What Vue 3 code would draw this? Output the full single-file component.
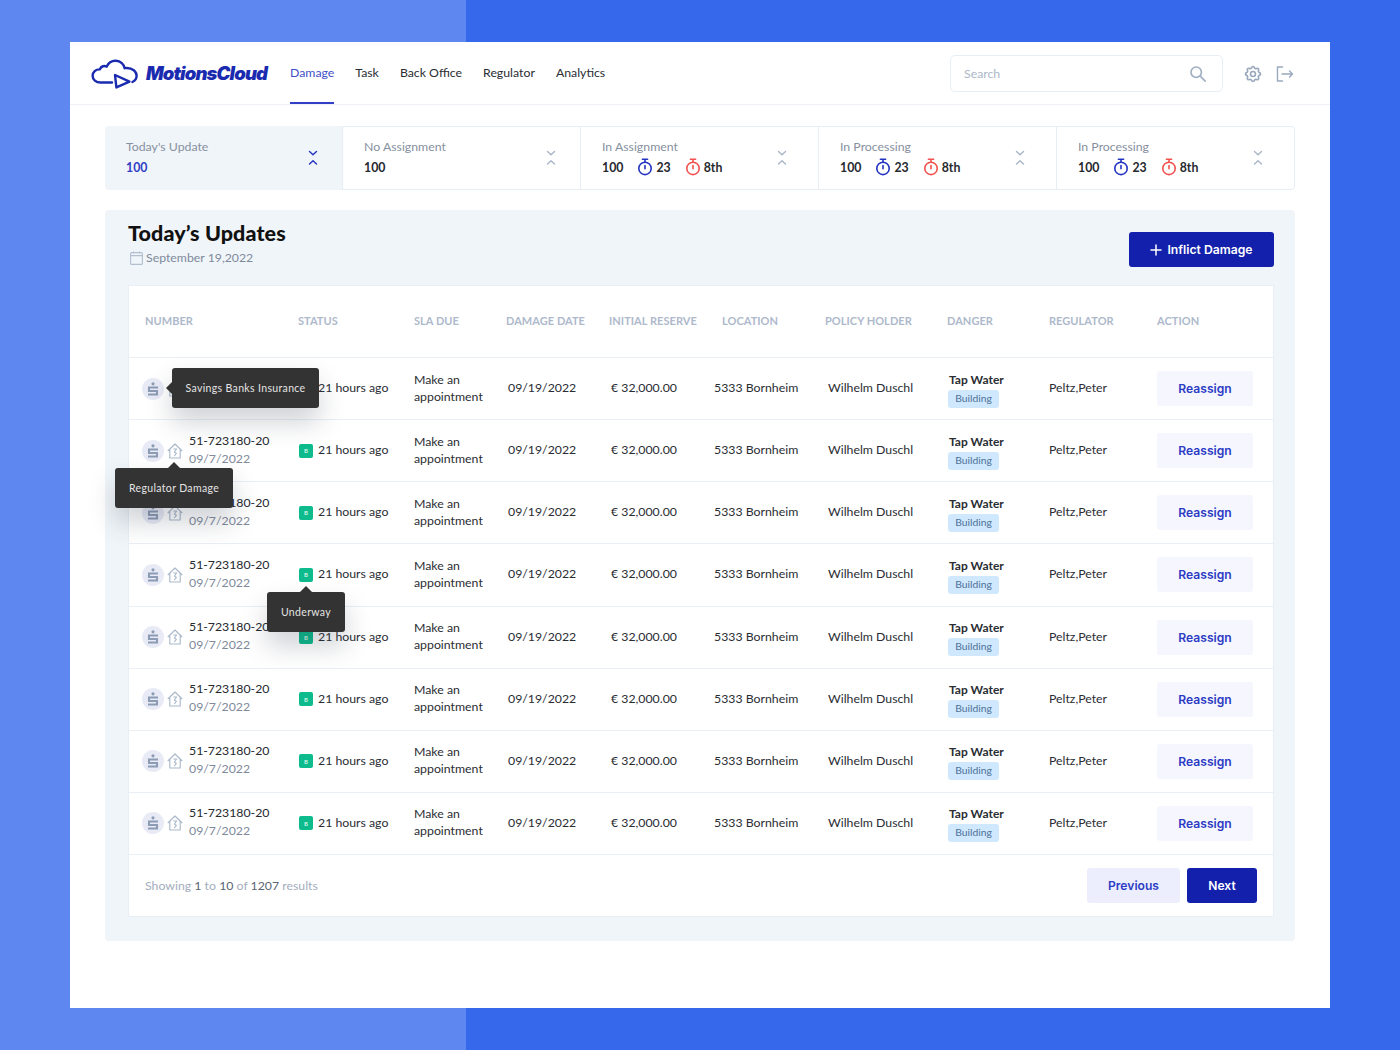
<script setup>
const navItems = ['Damage', 'Task', 'Back Office', 'Regulator', 'Analytics']
const stats = [
  { label: "Today's Update", value: '100', active: true },
  { label: 'No Assignment', value: '100' },
  { label: 'In Assignment', value: '100', timers: true },
  { label: 'In Processing', value: '100', timers: true },
  { label: 'In Processing', value: '100', timers: true }
]
const headers = ['NUMBER', 'STATUS', 'SLA DUE', 'DAMAGE DATE', 'INITIAL RESERVE', 'LOCATION', 'POLICY HOLDER', 'DANGER', 'REGULATOR', 'ACTION']
const rows = [
  { id: 1, tip: 'bank' },
  { id: 2, tip: 'house' },
  { id: 3 },
  { id: 4, tip: 'status' },
  { id: 5 },
  { id: 6 },
  { id: 7 },
  { id: 8 }
]
</script>

<template>
  <div class="page">
    <div class="window">
      <header class="topbar">
        <div class="logo">
          <svg class="logo-mark" width="48" height="30" viewBox="0 0 48 30" fill="none" stroke="#1a2bb0" stroke-width="2.4" stroke-linejoin="round" stroke-linecap="round">
            <path d="M21 23.5H9.5C5 23.5 1.6 20.6 1.6 16.8C1.6 13 4.8 10.3 8.7 10.4C10.3 6.9 13.3 6.4 15.7 7.6C17.6 3.4 21.3 1.6 25 1.8C29.6 2 33 5.3 33.6 9.2C34.3 9 35 9 35.8 9C41.4 9 45.6 12.4 45.6 16.8C45.6 19.4 44.2 21.8 41.4 23" />
            <path d="M24 16L38.5 22.6L25.4 28.4Z" />
          </svg>
          <span class="logo-text">MotionsCloud</span>
        </div>
        <nav class="nav">
          <a v-for="(item, i) in navItems" :key="item" class="nav-item" :class="{ active: i === 0 }">{{ item }}</a>
        </nav>
        <div class="search">
          <span class="search-text">Search</span>
          <svg width="18" height="18" viewBox="0 0 18 18" fill="none" stroke="#a3b0c2" stroke-width="1.7" stroke-linecap="round">
            <circle cx="7.2" cy="7.2" r="5.2" />
            <path d="M11.2 11.2L16.2 16.2" />
          </svg>
        </div>
        <svg class="gear" width="20" height="20" viewBox="0 0 24 24" fill="none" stroke="#9aa9bd" stroke-width="2" stroke-linejoin="round">
          <path d="M10.325 4.317c.426-1.756 2.924-1.756 3.35 0a1.724 1.724 0 002.573 1.066c1.543-.94 3.31.826 2.37 2.37a1.724 1.724 0 001.065 2.572c1.756.426 1.756 2.924 0 3.35a1.724 1.724 0 00-1.066 2.573c.94 1.543-.826 3.31-2.37 2.37a1.724 1.724 0 00-2.572 1.065c-.426 1.756-2.924 1.756-3.35 0a1.724 1.724 0 00-2.573-1.066c-1.543.94-3.31-.826-2.37-2.37a1.724 1.724 0 00-1.065-2.572c-1.756-.426-1.756-2.924 0-3.35a1.724 1.724 0 001.066-2.573c-.94-1.543.826-3.31 2.37-2.37.996.608 2.296.07 2.572-1.065z" />
          <circle cx="12" cy="12" r="3" />
        </svg>
        <svg class="exit" width="18" height="16" viewBox="0 0 18 16" fill="none" stroke="#9aa9bd" stroke-width="1.4" stroke-linecap="round" stroke-linejoin="round">
          <path d="M6.5 1H1.5V15H6.5" />
          <path d="M6 8H16.5M13.5 5L16.5 8L13.5 11" />
        </svg>
      </header>

      <main class="content">
        <section class="stats">
          <div v-for="(s, i) in stats" :key="i" class="stat" :class="{ active: s.active }">
            <div class="stat-body">
              <div class="stat-label">{{ s.label }}</div>
              <div class="stat-values">
                <span class="stat-num">{{ s.value }}</span>
                <template v-if="s.timers">
                  <span class="timer">
                    <svg width="16" height="18" viewBox="0 0 16 18" fill="none" stroke="#2434c2" stroke-width="1.6" stroke-linecap="round">
                      <circle cx="8" cy="10.4" r="6.2" />
                      <path d="M5.4 1.2H10.6M8 1.4V4M8 7.6V10.8" />
                    </svg>
                    23
                  </span>
                  <span class="timer">
                    <svg width="16" height="18" viewBox="0 0 16 18" fill="none" stroke="#f2514f" stroke-width="1.6" stroke-linecap="round">
                      <circle cx="8" cy="10.4" r="6.2" />
                      <path d="M5.4 1.2H10.6M8 1.4V4M8 7.6V10.8" />
                    </svg>
                    8th
                  </span>
                </template>
              </div>
            </div>
            <svg class="chev" width="10" height="16" viewBox="0 0 10 16" fill="none" :stroke="s.active ? '#2434c2' : '#a9b6c8'" stroke-width="1.4" stroke-linecap="round" stroke-linejoin="round">
              <path d="M1.5 1.5L5 4.8L8.5 1.5M1.5 14L5 10.7L8.5 14" />
            </svg>
          </div>
        </section>

        <section class="panel">
          <div class="panel-head">
            <div>
              <h1 class="title">Today’s Updates</h1>
              <div class="date">
                <svg width="13" height="14" viewBox="0 0 13 14" fill="none" stroke="#b3bfd0" stroke-width="1.1">
                  <rect x="0.6" y="1.6" width="11.8" height="11.8" rx="1" />
                  <path d="M0.6 4.6H12.4M3.5 0.4V2.4M9.5 0.4V2.4" />
                </svg>
                September 19,2022
              </div>
            </div>
            <button class="btn-primary">
              <svg width="12" height="12" viewBox="0 0 12 12" stroke="#fff" stroke-width="1.5" stroke-linecap="round"><path d="M6 1V11M1 6H11" /></svg>
              Inflict Damage
            </button>
          </div>

          <div class="card">
            <div class="thead">
              <div v-for="h in headers" :key="h">{{ h }}</div>
            </div>
            <div v-for="r in rows" :key="r.id" class="row">
              <div class="icons">
                <svg class="bank" width="22" height="22" viewBox="0 0 22 22">
                  <circle cx="11" cy="11" r="11" fill="#e8eaf6" />
                  <circle cx="11" cy="5.8" r="1.6" fill="#8c9cb5" />
                  <path d="M16 9.5H7V13H15V16.5H6" fill="none" stroke="#8c9cb5" stroke-width="2.1" />
                </svg>
                <svg class="house" width="16" height="16" viewBox="0 0 16 16" fill="none" stroke="#a8b7ca" stroke-width="1.1" stroke-linejoin="round">
                  <path d="M0.8 8L8 1L15.2 8M2.8 6.2V15H13.2V6.2" />
                  <path d="M6.4 6H9.6L7.4 9L9.4 10.4L7.2 13" />
                </svg>
                <div v-if="r.tip === 'bank'" class="tip tip-bank">Savings Banks Insurance</div>
                <div v-if="r.tip === 'house'" class="tip tip-house">Regulator Damage</div>
              </div>
              <div class="two-line">
                <div class="num">51-723180-20</div>
                <div class="sub">09/7/2022</div>
              </div>
              <div class="status">
                <span class="badge">B</span>
                21 hours ago
                <div v-if="r.tip === 'status'" class="tip tip-status">Underway</div>
              </div>
              <div class="sla">Make an<br />appointment</div>
              <div>09/19/2022</div>
              <div>€ 32,000.00</div>
              <div>5333 Bornheim</div>
              <div>Wilhelm Duschl</div>
              <div class="danger">
                <div class="danger-name">Tap Water</div>
                <span class="tag">Building</span>
              </div>
              <div>Peltz,Peter</div>
              <button class="btn-soft">Reassign</button>
            </div>
            <div class="foot">
              <div class="showing">Showing <b>1</b> to <b>10</b> of <b>1207</b> results</div>
              <div class="pager">
                <button class="btn-prev">Previous</button>
                <button class="btn-next">Next</button>
              </div>
            </div>
          </div>
        </section>
      </main>
    </div>
  </div>
</template>

<style scoped>
* { box-sizing: border-box; }
.page {
  width: 1400px;
  height: 1050px;
  padding: 42px 70px;
  background: linear-gradient(90deg, #5e88f0 466px, #3568ea 466px);
  font-family: Lato, "Liberation Sans", sans-serif;
  font-size: 12.3px;
  color: #26292e;
  overflow: hidden;
}
.window { height: 966px; background: #fff; }
.topbar {
  height: 63px;
  display: flex;
  align-items: center;
  padding: 0 36px 0 21px;
  border-bottom: 1px solid #eef2f7;
}
.logo { display: flex; align-items: center; width: 199px; }
.logo-mark { flex: none; margin-top: 2px; }
.logo-text {
  margin-left: 7px;
  font-family: Inter, sans-serif;
  font-weight: 900;
  font-style: italic;
  font-size: 18.5px;
  letter-spacing: -0.85px;
  color: #1a2bb0;
}
.nav { display: flex; gap: 21px; height: 62px; margin-right: auto; }
.nav-item {
  display: flex;
  align-items: center;
  height: 62px;
  padding-top: 1px;
  font-size: 12.3px;
  color: #2a2d33;
  border-bottom: 2px solid transparent;
}
.nav-item.active { color: #3f4fc8; border-bottom-color: #3040c6; }
.search {
  width: 273px;
  height: 37px;
  margin-top: 1px;
  display: flex;
  align-items: center;
  justify-content: space-between;
  padding: 0 15px 0 13px;
  border: 1px solid #e8eef5;
  border-radius: 5px;
}
.search-text { color: #abb7c8; font-size: 12.3px; }
.gear { margin-left: 20px; margin-top: 1px; }
.exit { margin-left: 13px; margin-top: 1px; }

.content { padding: 21px 35px 0; }
.stats {
  display: grid;
  grid-template-columns: 237px 238px 238px 238px 239px;
  height: 64px;
}
.stat {
  display: flex;
  align-items: center;
  justify-content: space-between;
  padding: 0 31px 0 21px;
  border: 1px solid #e6edf5;
  border-right: 0;
}
.stat:nth-child(-n+2) { padding-right: 24px; }
.stat:last-child { border-right: 1px solid #e6edf5; border-radius: 0 4px 4px 0; }
.stat.active { background: #f0f5f9; border: 0; border-radius: 4px 0 0 4px; }
.stat-label { color: #8790a0; font-size: 12.3px; line-height: 16px; margin-bottom: 3px; }
.stat-values { display: flex; align-items: center; height: 20px; font-weight: 700; font-size: 12.3px; color: #26292e; }
.active .stat-num { color: #3040c6; }
.timer { display: flex; align-items: center; gap: 3px; margin-left: 14px; }
.timer svg { margin-top: -1px; }
.chev { flex: none; }

.panel {
  margin-top: 20px;
  height: 731px;
  padding: 0 21px 0 23px;
  background: #f0f5f9;
  border-radius: 4px;
}
.panel-head {
  height: 75px;
  display: flex;
  justify-content: space-between;
  align-items: flex-start;
  padding-top: 10px;
}
.title {
  margin: 0;
  font-family: Lato, sans-serif;
  font-weight: 900;
  font-size: 21.5px;
  line-height: 26px;
  letter-spacing: 0.1px;
  color: #111;
}
.date { display: flex; align-items: center; gap: 3px; margin: 4px 0 0 2px; color: #7f8a9b; font-size: 12.3px; line-height: 16px; }
.btn-primary {
  margin-top: 12px;
  width: 145px;
  height: 35px;
  display: flex;
  align-items: center;
  justify-content: center;
  gap: 5px;
  padding-top: 1px;
  border: 0;
  border-radius: 3px;
  background: #1220ac;
  color: #fff;
  font-family: Inter, sans-serif;
  font-weight: 600;
  font-size: 12.2px;
}
.card {
  height: 632px;
  background: #fff;
  border: 1px solid #e9eff6;
  position: relative;
}
.thead {
  height: 71px;
  display: grid;
  grid-template-columns: 153px 116px 92px 103px 113px 103px 122px 102px 108px auto;
  align-items: center;
  padding: 0 0 2px 16px;
  font-size: 11px;
  letter-spacing: 0.05px;
  font-weight: 700;
  color: #aeb9cb;
}
.row {
  height: 62.125px;
  display: grid;
  grid-template-columns: 47px 109px 116px 94px 103px 103px 114px 120px 101px 108px 96px;
  align-items: center;
  padding: 0 0 2px 13px;
  border-top: 1px solid #e9eff5;
  font-size: 12.3px;
  color: #2a2d33;
}
.icons { position: relative; display: flex; align-items: center; gap: 3px; margin-top: 2px; }
.bank, .house { flex: none; }
.two-line { line-height: 18px; }
.num { color: #26292e; }
.sub { color: #7f8a9b; }
.status { position: relative; display: flex; align-items: center; gap: 5px; margin-left: 1px; }
.badge {
  width: 14px;
  height: 14px;
  margin-top: 2px;
  display: flex;
  align-items: center;
  justify-content: center;
  border-radius: 2px;
  background: #0dbb8d;
  color: #d5f5ea;
  font-size: 6px;
  font-weight: 700;
}
.sla { line-height: 17px; }
.danger { display: flex; flex-direction: column; align-items: flex-start; margin-top: 4px; }
.danger-name { font-weight: 700; font-size: 12px; line-height: 16px; margin: 0 0 2px 1px; }
.tag {
  width: 51px;
  height: 18px;
  line-height: 17px;
  text-align: center;
  border-radius: 3px;
  background: #cfe8fd;
  color: #4d7099;
  font-size: 10.3px;
}
.btn-soft {
  width: 96px;
  height: 35px;
  margin-top: 2px;
  border: 0;
  border-radius: 3px;
  background: #f5f6fe;
  color: #2c3bc4;
  font-family: Inter, sans-serif;
  font-weight: 600;
  font-size: 12.1px;
}
.tip {
  position: absolute;
  z-index: 5;
  height: 40px;
  display: flex;
  align-items: center;
  justify-content: center;
  border-radius: 3px;
  background: #333;
  color: #e4e4e4;
  font-size: 10.5px;
  letter-spacing: 0.35px;
  white-space: nowrap;
  box-shadow: 0 14px 26px rgba(40, 50, 70, 0.22);
}
.tip::before {
  content: "";
  position: absolute;
  width: 0;
  height: 0;
  border: 6px solid transparent;
}
.tip-bank { left: 30px; top: -10px; width: 147px; }
.tip-bank::before { left: -12px; top: 14px; border-right-color: #333; }
.tip-house { left: -27px; top: 28px; width: 118px; }
.tip-house::before { left: 53px; top: -12px; border-bottom-color: #333; }
.tip-status { left: -32px; top: 26px; width: 78px; }
.tip-status::before { left: 33px; top: -12px; border-bottom-color: #333; }
.foot {
  height: 61px;
  display: flex;
  align-items: center;
  justify-content: space-between;
  padding: 0 16px;
  border-top: 1px solid #e9eff5;
}
.showing { color: #a3adbd; font-size: 12.3px; }
.showing b { font-weight: 400; color: #5b6573; }
.pager { display: flex; gap: 7px; }
.btn-prev, .btn-next {
  height: 35px;
  border: 0;
  border-radius: 3px;
  font-family: Inter, sans-serif;
  font-weight: 600;
  font-size: 12.1px;
}
.btn-prev { width: 93px; background: #eceefd; color: #2c3bc4; }
.btn-next { width: 70px; background: #1220ac; color: #fff; }
</style>
